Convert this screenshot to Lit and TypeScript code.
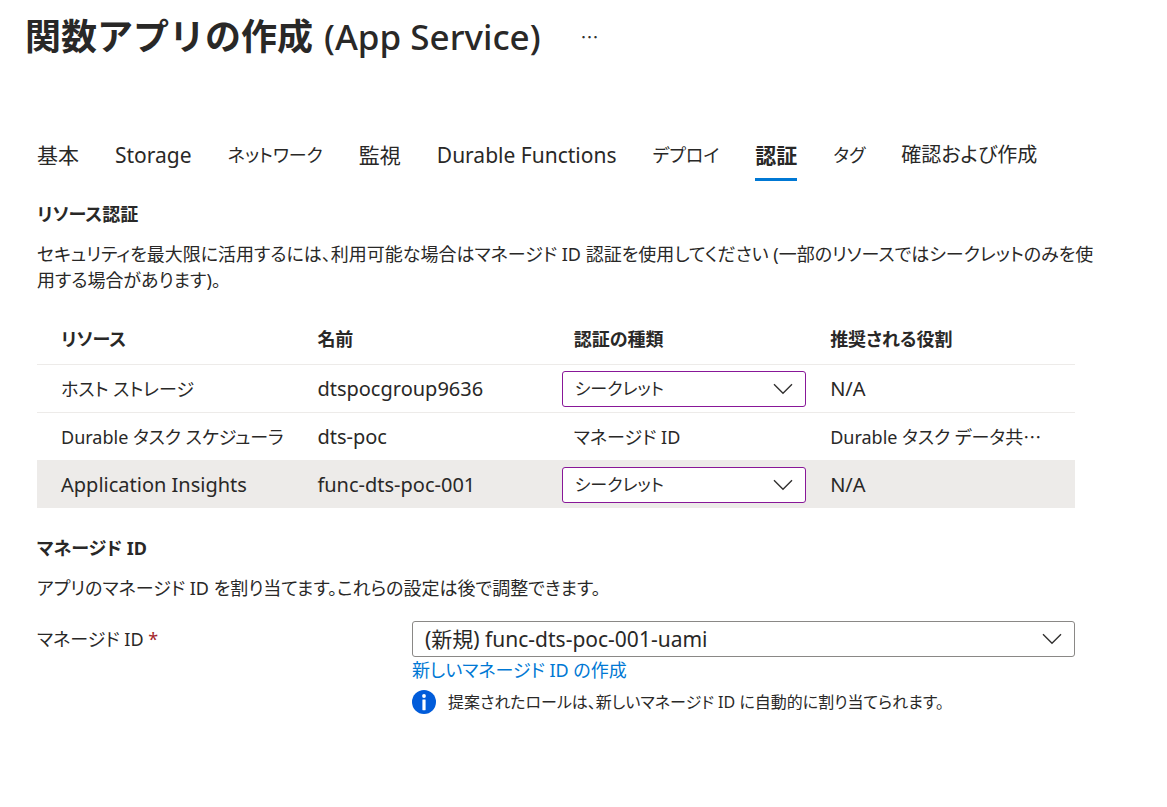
import { LitElement, html, css } from "lit";
import { customElement, state } from "lit/decorators.js";
import { classMap } from "lit/directives/class-map.js";

interface ResourceRow {
  resource: string;
  name: string;
  auth: string;
  editable: boolean;
  role: string;
  truncated?: boolean;
  highlighted?: boolean;
}

const TABS = [
  "基本",
  "Storage",
  "ネットワーク",
  "監視",
  "Durable Functions",
  "デプロイ",
  "認証",
  "タグ",
  "確認および作成",
];

const ROWS: ResourceRow[] = [
  { resource: "ホスト ストレージ", name: "dtspocgroup9636", auth: "シークレット", editable: true, role: "N/A" },
  { resource: "Durable タスク スケジューラ", name: "dts-poc", auth: "マネージド ID", editable: false, role: "Durable タスク データ共", truncated: true },
  { resource: "Application Insights", name: "func-dts-poc-001", auth: "シークレット", editable: true, role: "N/A", highlighted: true },
];

const isLatin = (text: string) => /^[\x20-\x7e]+$/.test(text);
const isKatakana = (text: string) => /^[\u30a0-\u30ff]+$/.test(text);
const hasHiragana = (text: string) => /[\u3040-\u309f]/.test(text);

@customElement("app-root")
export class AppRoot extends LitElement {
  @state() private active = "認証";

  static styles = css`
    :host {
      display: block;
      min-height: 100vh;
      background: #fff;
      color: #292827;
      font-family: "Noto Sans", "Noto Sans CJK JP", sans-serif;
      font-size: 18px;
      line-height: 26px;
      font-feature-settings: "palt";
    }
    .header {
      display: flex;
      align-items: center;
      gap: 40px;
      padding: 6px 25px;
    }
    .title {
      display: flex;
      align-items: baseline;
      gap: 11px;
      margin: 0;
      font-size: 35px;
      font-weight: 500;
      line-height: 56px;
    }
    .title-ja {
      font-family: "Noto Sans CJK JP", sans-serif;
      font-size: 36px;
      font-weight: 700;
      font-feature-settings: normal;
    }
    .more {
      padding: 0;
      border: 0;
      background: none;
      color: #323130;
      font-family: "Noto Sans CJK JP", sans-serif;
      font-size: 18px;
      line-height: 24px;
    }
    .content {
      padding: 64px 92px 0 37px;
    }
    .tabs {
      display: flex;
      gap: 36px;
    }
    .tab {
      padding: 5px 0 8px;
      border: 0;
      border-bottom: 3px solid transparent;
      background: none;
      color: inherit;
      font: inherit;
      font-feature-settings: inherit;
      font-size: 21px;
      line-height: 30px;
      white-space: nowrap;
    }
    .tab.kana {
      font-size: 18px;
    }
    .tab.mixed {
      font-size: 20px;
    }
    .tab.active {
      border-bottom-color: #0078d4;
      font-weight: 700;
    }
    .heading {
      margin: 20px 0 14px;
      font-size: 18px;
      font-weight: 700;
      line-height: 26px;
    }
    .text {
      margin: 0 -20px 0 0;
    }
    .table {
      width: 100%;
      margin-top: 20px;
      border-collapse: collapse;
      table-layout: fixed;
    }
    .col {
      width: 24.7%;
    }
    .table th,
    .table td {
      height: 47px;
      padding: 0 0 0 24px;
      border-bottom: 1px solid #edebe9;
      text-align: left;
      white-space: nowrap;
    }
    .table th {
      height: 51px;
      font-weight: 700;
    }
    .table .control {
      padding-left: 12px;
    }
    .table .latin {
      font-size: 20px;
    }
    .table tr.highlighted td {
      border-bottom: 0;
      background: #edebe9;
    }
    .ellipsis {
      font-family: "Noto Sans CJK JP", sans-serif;
      font-feature-settings: normal;
    }
    .box {
      display: grid;
      align-items: center;
    }
    .field {
      grid-area: 1 / 1;
      appearance: none;
      box-sizing: border-box;
      width: 100%;
      height: 36px;
      margin: 0;
      padding: 0 44px 0 12px;
      border: 1px solid #8a8886;
      border-radius: 3px;
      background: #fff;
      color: #292827;
      font: inherit;
      font-feature-settings: inherit;
      font-size: 21px;
      line-height: 26px;
    }
    .field.changed {
      border-color: #881798;
      font-size: 17px;
    }
    .chevron {
      grid-area: 1 / 1;
      justify-self: end;
      margin-right: 13px;
      pointer-events: none;
    }
    .section {
      margin-top: 27px;
    }
    .form {
      display: grid;
      grid-template-columns: 375px minmax(0, 1fr);
      margin-top: 20px;
    }
    .label {
      line-height: 36px;
    }
    .required {
      color: #a4262c;
    }
    .link {
      display: inline-block;
      color: #0078d4;
      text-decoration: none;
    }
    .info {
      display: flex;
      align-items: center;
      gap: 12px;
      margin-top: 6px;
      font-size: 16px;
    }
    .info-icon {
      flex: none;
    }
  `;

  private renderSelect(id: string, label: string, value: string, changed = false) {
    return html`
      <div class="box">
        <select id=${id} class=${classMap({ field: true, changed })} aria-label=${label}>
          <option selected>${value}</option>
        </select>
        <svg class="chevron" width="20" height="12" viewBox="0 0 20 12" aria-hidden="true">
          <path d="M1 1.2 L10 10.2 L19 1.2" fill="none" stroke="#323130" stroke-width="1.4" />
        </svg>
      </div>
    `;
  }

  private renderCell(text: string, suffix: unknown = null) {
    return html`<td class=${classMap({ latin: isLatin(text) })}>${text}${suffix}</td>`;
  }

  private renderRow(row: ResourceRow, index: number) {
    return html`
      <tr class=${classMap({ highlighted: !!row.highlighted })}>
        ${this.renderCell(row.resource)}
        ${this.renderCell(row.name)}
        ${row.editable
          ? html`<td class="control">
              ${this.renderSelect(`auth-${index}`, `${row.resource} 認証の種類`, row.auth, true)}
            </td>`
          : this.renderCell(row.auth)}
        ${this.renderCell(row.role, row.truncated ? html`<span class="ellipsis">…</span>` : null)}
      </tr>
    `;
  }

  render() {
    return html`
      <header class="header">
        <h1 class="title"><span class="title-ja">関数アプリの作成</span> <span>(App Service)</span></h1>
        <button class="more" aria-label="その他">…</button>
      </header>
      <main class="content">
        <div class="tabs" role="tablist">
          ${TABS.map(
            (tab) => html`<button
              class=${classMap({
                tab: true,
                kana: isKatakana(tab),
                mixed: hasHiragana(tab),
                active: tab === this.active,
              })}
              role="tab"
              aria-selected=${tab === this.active ? "true" : "false"}
              @click=${() => (this.active = tab)}
            >${tab}</button>`
          )}
        </div>
        <section>
          <h2 class="heading">リソース認証</h2>
          <p class="text">セキュリティを最大限に活用するには、利用可能な場合はマネージド ID 認証を使用してください (一部のリソースではシークレットのみを使用する場合があります)。</p>
          <table class="table">
            <colgroup>
              <col class="col" /><col class="col" /><col class="col" /><col />
            </colgroup>
            <thead>
              <tr><th>リソース</th><th>名前</th><th>認証の種類</th><th>推奨される役割</th></tr>
            </thead>
            <tbody>
              ${ROWS.map((row, index) => this.renderRow(row, index))}
            </tbody>
          </table>
        </section>
        <section class="section">
          <h2 class="heading">マネージド ID</h2>
          <p class="text">アプリのマネージド ID を割り当てます。これらの設定は後で調整できます。</p>
          <div class="form">
            <label class="label" for="identity">マネージド ID <span class="required">*</span></label>
            <div>
              ${this.renderSelect("identity", "マネージド ID", "(新規) func-dts-poc-001-uami")}
              <a class="link" href="#">新しいマネージド ID の作成</a>
              <div class="info">
                <svg class="info-icon" width="24" height="24" viewBox="0 0 24 24" aria-hidden="true">
                  <circle cx="12" cy="12" r="12" fill="#015cda" />
                  <circle cx="12" cy="6" r="1.9" fill="#fff" />
                  <rect x="10.4" y="9.4" width="3.2" height="10.8" rx="0.4" fill="#fff" />
                </svg>
                <span>提案されたロールは、新しいマネージド ID に自動的に割り当てられます。</span>
              </div>
            </div>
          </div>
        </section>
      </main>
    `;
  }
}
